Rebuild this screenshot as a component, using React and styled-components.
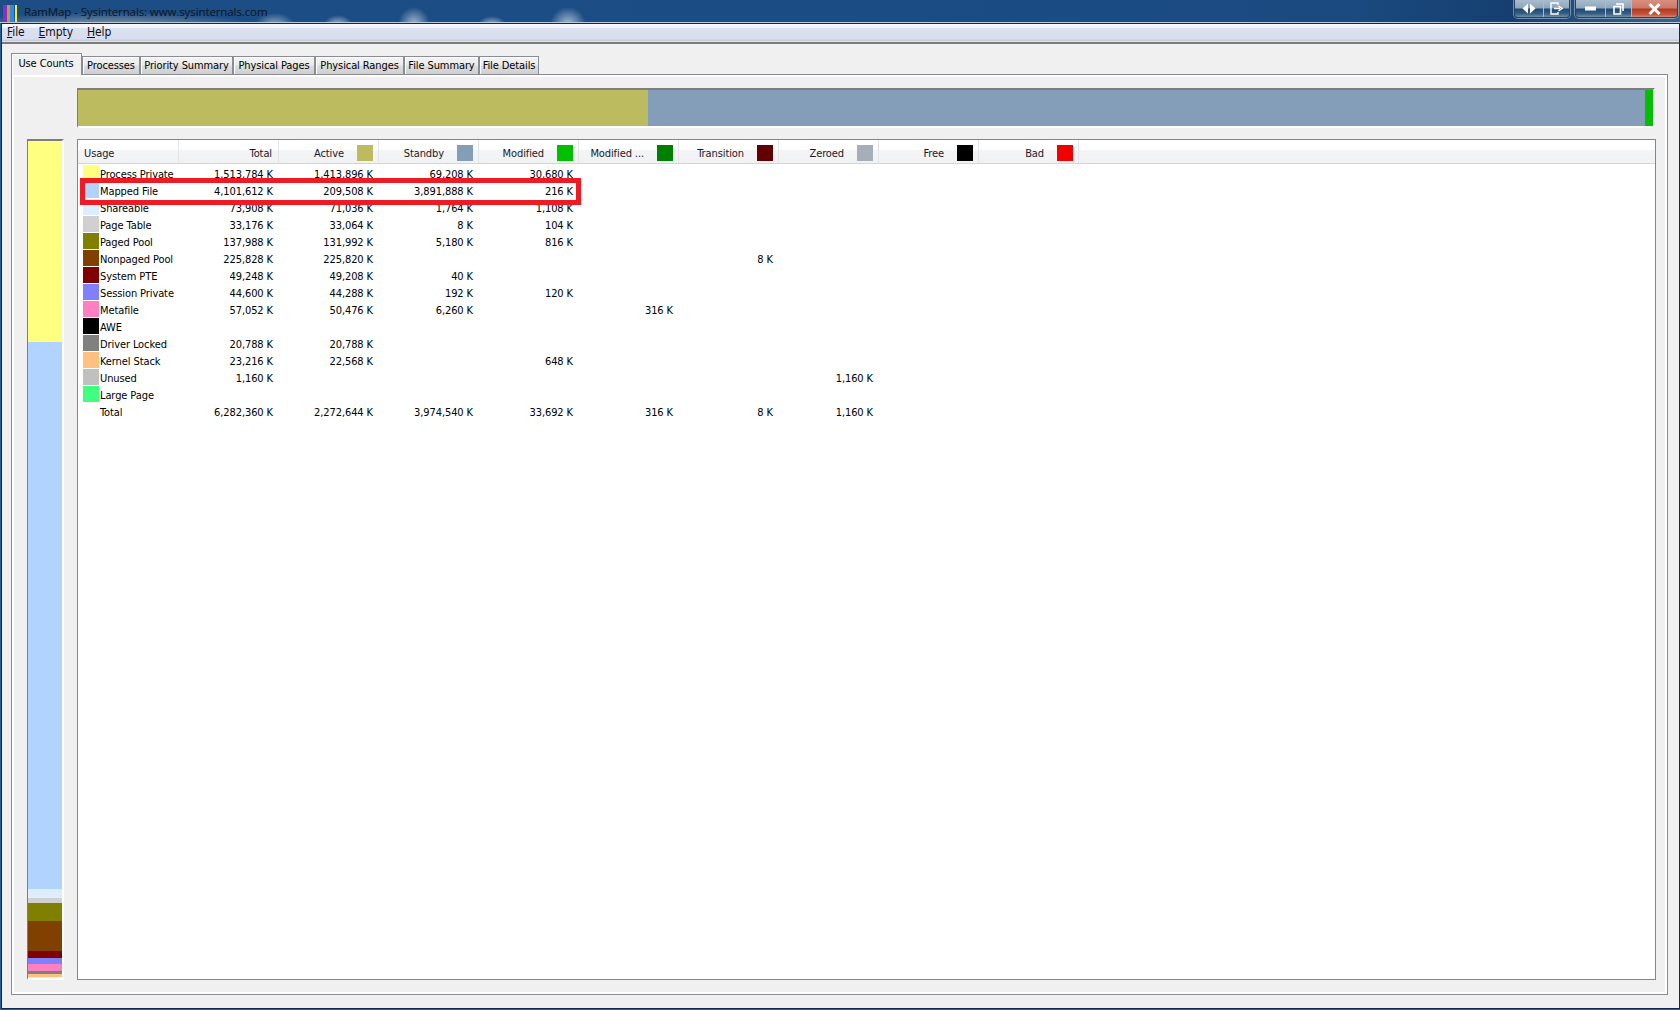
import React from "react";
import styled, { createGlobalStyle } from "styled-components";

const GlobalStyle = createGlobalStyle`
  html, body {
    margin: 0;
    padding: 0;
    background: #2b5f92;
  }
  * {
    box-sizing: border-box;
  }
`;

const uiFont = `"DejaVu Sans Condensed", "DejaVu Sans", "Liberation Sans", sans-serif`;

const Window = styled.div`
  width: 1680px;
  height: 1010px;
  display: flex;
  flex-direction: column;
  overflow: hidden;
  font-family: ${uiFont};
  font-size: 11px;
  letter-spacing: -0.1px;
  color: #000;
  background: #2b5f92;
  padding: 0 0 1px 1px;
`;

const TitleBar = styled.div`
  height: 23px;
  margin: 0 -1px 0 -1px;
  flex: none;
  display: flex;
  align-items: flex-start;
  border-bottom: 1px solid #b9cadb;
  background:
    radial-gradient(ellipse 20px 12px at 275px 25px, #94acc6 0%, rgba(148, 172, 198, 0) 100%),
    radial-gradient(ellipse 15px 11px at 338px 26px, #b9cbde 0%, rgba(185, 203, 222, 0) 100%),
    radial-gradient(ellipse 16px 17px at 414px 24px, #a3b7cd 0%, rgba(163, 183, 205, 0) 100%),
    radial-gradient(ellipse 15px 10px at 492px 26px, #b9cbde 0%, rgba(185, 203, 222, 0) 100%),
    radial-gradient(ellipse 18px 17px at 568px 24px, #a9bcd1 0%, rgba(169, 188, 209, 0) 100%),
    radial-gradient(ellipse 150px 14px at 110px 26px, #8d9aa6 0%, rgba(141, 154, 166, 0) 100%),
    linear-gradient(90deg, #1c4d84 0%, #1b4c84 55%, #1a4a80 80%, #163f70 90%, #3c6388 100%);
`;

const AppIcon = styled.svg`
  width: 16px;
  height: 18px;
  margin: 4px 0 0 2px;
  flex: none;
`;

const TitleText = styled.div`
  margin: 4px 0 0 6px;
  font-family: "Open Sans", "Liberation Sans", sans-serif;
  font-size: 11.5px;
  line-height: 16px;
  letter-spacing: -0.1px;
  color: #0b1420;
  white-space: nowrap;
`;

const CaptionGroup = styled.div`
  display: flex;
  height: 18px;
  margin: ${(p) => p.$margin};
  border: 1px solid #27425f;
  border-top: none;
  border-radius: 0 0 4px 4px;
  box-shadow: 0 0 0 1px rgba(220, 232, 244, 0.45);
  overflow: hidden;
`;

const CaptionButton = styled.div`
  width: ${(p) => p.$w}px;
  display: flex;
  align-items: center;
  justify-content: center;
  border-left: ${(p) => (p.$first ? "none" : "1px solid #a9bccf")};
  background: ${(p) =>
    p.$close
      ? "linear-gradient(180deg, #d98f7f 0%, #cd7a68 45%, #b23a20 55%, #c4553d 85%, #d28a78 100%)"
      : "linear-gradient(180deg, #a9bccd 0%, #8fa7bc 45%, #214a74 55%, #365f86 80%, #6f8fa9 100%)"};
`;

const CaptionIcon = styled.svg`
  display: block;
`;

const Client = styled.div`
  flex: 1;
  display: flex;
  flex-direction: column;
  min-height: 0;
  background: #f0f0f0;
  border: 1px solid #15294a;
`;

const MenuBar = styled.div`
  height: 20px;
  flex: none;
  display: flex;
  align-items: flex-start;
  padding: 1px 0 0 5px;
  gap: 14px;
  border-bottom: 2px solid #7c7c7c;
  background: linear-gradient(180deg, #f7f9fc 0%, #f0f3f9 20%, #dce1f1 25%, #d7ddef 85%, #bfc3cf 90%, #eef0f4 100%);
`;

const MenuItem = styled.div`
  font-size: 12px;
  line-height: 15px;
  letter-spacing: -0.1px;
  color: #111;
  & u {
    text-underline-offset: 1px;
  }
`;

const TabArea = styled.div`
  flex: 1;
  min-height: 0;
  display: flex;
  flex-direction: column;
  padding: 10px 11px 13px 9px;
`;

const TabRow = styled.div`
  display: flex;
  align-items: flex-end;
  height: 21px;
  flex: none;
  margin-bottom: -1px;
  position: relative;
  z-index: 1;
`;

const Tab = styled.div`
  width: ${(p) => p.$w}px;
  height: ${(p) => (p.$active ? "22px" : "19px")};
  display: flex;
  align-items: center;
  justify-content: center;
  padding-bottom: ${(p) => (p.$active ? "2px" : "0")};
  padding-right: ${(p) => (p.$active ? "1px" : "0")};
  border: 1px solid #898c95;
  border-bottom: ${(p) => (p.$active ? "none" : "1px solid #898c95")};
  background: ${(p) =>
    p.$active ? "#f0f0f0" : "linear-gradient(180deg, #f3f3f3 0%, #ebebeb 45%, #dcdcdc 55%, #cfcfcf 100%)"};
  box-shadow: inset 1px 1px 0 #fff;
  white-space: nowrap;
`;

const Panel = styled.div`
  flex: 1;
  min-height: 0;
  display: grid;
  grid-template-columns: 37px 1fr;
  grid-template-rows: 40px 1fr;
  column-gap: 13px;
  row-gap: 11px;
  padding: 13px 11px 14px 15px;
  background: #f0f0f0;
  border: 1px solid #898c95;
  box-shadow: inset 0 0 0 2px #fff;
`;

const Sunken = styled.div`
  display: flex;
  flex-direction: ${(p) => p.$dir};
  grid-column: ${(p) => p.$col};
  grid-row: ${(p) => p.$row};
  margin-right: ${(p) => p.$inset || "0"};
  border-top: 2px solid #7d7d7d;
  border-left: 1px solid #7d7d7d;
  border-right: 2px solid #fff;
  border-bottom: 2px solid #fff;
  min-height: 0;
`;

const Segment = styled.div`
  flex: none;
  background: ${(p) => p.$c};
  height: ${(p) => (p.$h ? `${p.$h}px` : "auto")};
  width: ${(p) => (p.$w ? `${p.$w}px` : "auto")};
  flex-grow: ${(p) => (p.$fill ? 1 : 0)};
`;

const TableBox = styled.div`
  grid-column: 2;
  grid-row: 2;
  position: relative;
  background: #fff;
  border: 1px solid #85858c;
  min-height: 0;
`;

const HeaderRow = styled.div`
  height: 24px;
  display: flex;
  border-bottom: 1px solid #d5d5d5;
  background: linear-gradient(180deg, #fff 0%, #fff 42%, #f3f4f6 46%, #f1f2f4 100%);
`;

const HeaderCell = styled.div`
  width: ${(p) => (p.$first ? "101px" : "100px")};
  flex: none;
  display: flex;
  align-items: center;
  justify-content: ${(p) => (p.$first ? "flex-start" : "flex-end")};
  gap: 13px;
  padding: ${(p) => (p.$first ? "3px 0 0 6px" : p.$swatch ? "3px 5px 0 0" : "3px 6px 0 0")};
  border-right: 1px solid #e3e5e8;
  white-space: nowrap;
  color: #1a1a2a;
`;

const HeaderSwatch = styled.span`
  width: 16px;
  height: 16px;
  flex: none;
  background: ${(p) => p.$c};
`;

const Rows = styled.div`
  padding-top: 1px;
`;

const Row = styled.div`
  height: 17px;
  display: flex;
  line-height: 19px;
`;

const NameCell = styled.div`
  width: 101px;
  flex: none;
  display: flex;
  padding-left: 5px;
  gap: 1px;
  white-space: nowrap;
`;

const RowSwatch = styled.span`
  width: 16px;
  height: 16px;
  flex: none;
  background: ${(p) => p.$c};
`;

const ValueCell = styled.div`
  width: 100px;
  flex: none;
  text-align: right;
  padding-right: 6px;
  white-space: nowrap;
`;

const Callout = styled.div`
  position: absolute;
  left: 2px;
  top: 38px;
  width: 501px;
  height: 27px;
  border: 5px solid #ed1c24;
  pointer-events: none;
`;

const tabs = [
  { label: "Use Counts", w: 71, active: true },
  { label: "Processes", w: 58 },
  { label: "Priority Summary", w: 93 },
  { label: "Physical Pages", w: 82 },
  { label: "Physical Ranges", w: 89 },
  { label: "File Summary", w: 75 },
  { label: "File Details", w: 60 },
];

const columns = [
  { label: "Total" },
  { label: "Active", c: "#bdbb5f" },
  { label: "Standby", c: "#849eba" },
  { label: "Modified", c: "#00c000" },
  { label: "Modified ...", c: "#008000" },
  { label: "Transition", c: "#600000" },
  { label: "Zeroed", c: "#a6aeba" },
  { label: "Free", c: "#000000" },
  { label: "Bad", c: "#f00000" },
];

const rows = [
  { name: "Process Private", c: "#ffff80", v: ["1,513,784 K", "1,413,896 K", "69,208 K", "30,680 K"] },
  { name: "Mapped File", c: "#b0d4ff", v: ["4,101,612 K", "209,508 K", "3,891,888 K", "216 K"] },
  { name: "Shareable", c: "#dceeff", v: ["73,908 K", "71,036 K", "1,764 K", "1,108 K"] },
  { name: "Page Table", c: "#d0d0d0", v: ["33,176 K", "33,064 K", "8 K", "104 K"] },
  { name: "Paged Pool", c: "#808000", v: ["137,988 K", "131,992 K", "5,180 K", "816 K"] },
  { name: "Nonpaged Pool", c: "#804000", v: ["225,828 K", "225,820 K", "", "", "", "8 K"] },
  { name: "System PTE", c: "#800000", v: ["49,248 K", "49,208 K", "40 K"] },
  { name: "Session Private", c: "#8080ff", v: ["44,600 K", "44,288 K", "192 K", "120 K"] },
  { name: "Metafile", c: "#ff80c0", v: ["57,052 K", "50,476 K", "6,260 K", "", "316 K"] },
  { name: "AWE", c: "#000000", v: [] },
  { name: "Driver Locked", c: "#808080", v: ["20,788 K", "20,788 K"] },
  { name: "Kernel Stack", c: "#ffc080", v: ["23,216 K", "22,568 K", "", "648 K"] },
  { name: "Unused", c: "#c0c0c0", v: ["1,160 K", "", "", "", "", "", "1,160 K"] },
  { name: "Large Page", c: "#40ff80", v: [] },
  { name: "Total", c: "transparent", v: ["6,282,360 K", "2,272,644 K", "3,974,540 K", "33,692 K", "316 K", "8 K", "1,160 K"] },
];

const usageStack = [
  { c: "#ffff80", h: 201 },
  { c: "#b0d4ff", h: 547 },
  { c: "#dceeff", h: 9 },
  { c: "#d0d0d0", h: 5 },
  { c: "#808000", h: 18 },
  { c: "#804000", h: 30 },
  { c: "#800000", h: 7 },
  { c: "#8080ff", h: 6 },
  { c: "#ff80c0", h: 7 },
  { c: "#808080", h: 3 },
  { c: "#ffc080", h: 3 },
];

const App = () => {
  return (
    <>
      <GlobalStyle />
      <Window>
        <TitleBar>
          <AppIcon viewBox="0 0 16 18">
            <rect x="1" y="1" width="4" height="17" fill="#7a35d0" />
            <rect x="5" y="1" width="3" height="17" fill="#f28a10" />
            <rect x="8" y="1" width="4" height="17" fill="#1f8ff0" />
            <rect x="13" y="1" width="2" height="17" fill="#f5e93a" />
          </AppIcon>
          <TitleText>RamMap - Sysinternals: www.sysinternals.com</TitleText>
          <CaptionGroup $margin="0 0 0 auto">
            <CaptionButton $first $w={28}>
              <CaptionIcon width="14" height="11" viewBox="0 0 14 11">
                <path d="M6 0.5 L6 10.5 L0.5 5.5 Z M8 0.5 L8 10.5 L13.5 5.5 Z" fill="#fff" />
              </CaptionIcon>
            </CaptionButton>
            <CaptionButton $w={26}>
              <CaptionIcon width="13" height="13" viewBox="0 0 13 13">
                <path d="M8 3 V1 H1 V12 H8 V10" fill="none" stroke="#fff" strokeWidth="1.4" />
                <path d="M4 6.5 H10 M8.5 4 L12 6.5 L8.5 9" fill="none" stroke="#fff" strokeWidth="1.4" />
              </CaptionIcon>
            </CaptionButton>
          </CaptionGroup>
          <CaptionGroup $margin="0 3px 0 5px">
            <CaptionButton $first $w={29}>
              <CaptionIcon width="12" height="5" viewBox="0 0 12 5">
                <rect x="0" y="0.5" width="11" height="4" fill="#fff" />
              </CaptionIcon>
            </CaptionButton>
            <CaptionButton $w={26}>
              <CaptionIcon width="11" height="12" viewBox="0 0 11 12">
                <path d="M3 1 H10 V8 M1 3.5 H7.5 V11 H1 Z" fill="none" stroke="#fff" strokeWidth="1.6" />
              </CaptionIcon>
            </CaptionButton>
            <CaptionButton $close $w={46}>
              <CaptionIcon width="13" height="12" viewBox="0 0 13 12">
                <path d="M1.5 1 L11.5 11 M11.5 1 L1.5 11" stroke="#fff" strokeWidth="3" />
              </CaptionIcon>
            </CaptionButton>
          </CaptionGroup>
        </TitleBar>
        <Client>
          <MenuBar>
            <MenuItem><u>F</u>ile</MenuItem>
            <MenuItem><u>E</u>mpty</MenuItem>
            <MenuItem><u>H</u>elp</MenuItem>
          </MenuBar>
          <TabArea>
            <TabRow>
              {tabs.map((t) => (
                <Tab key={t.label} $w={t.w} $active={t.active}>{t.label}</Tab>
              ))}
            </TabRow>
            <Panel>
              <Sunken $dir="row" $col="2" $row="1" $inset="1px">
                <Segment $c="#bdbb5f" $w={570} />
                <Segment $c="#849eba" $fill />
                <Segment $c="#00c000" $w={8} />
              </Sunken>
              <Sunken $dir="column" $col="1" $row="2">
                {usageStack.map((s, i) => (
                  <Segment key={i} $c={s.c} $h={s.h} />
                ))}
              </Sunken>
              <TableBox>
                <HeaderRow>
                  <HeaderCell $first>Usage</HeaderCell>
                  {columns.map((col) => (
                    <HeaderCell key={col.label} $swatch={!!col.c}>
                      {col.label}
                      {col.c && <HeaderSwatch $c={col.c} />}
                    </HeaderCell>
                  ))}
                </HeaderRow>
                <Rows>
                  {rows.map((r) => (
                    <Row key={r.name}>
                      <NameCell>
                        <RowSwatch $c={r.c} />
                        {r.name}
                      </NameCell>
                      {r.v.map((val, i) => (
                        <ValueCell key={i}>{val}</ValueCell>
                      ))}
                    </Row>
                  ))}
                </Rows>
                <Callout />
              </TableBox>
            </Panel>
          </TabArea>
        </Client>
      </Window>
    </>
  );
};

export default App;
